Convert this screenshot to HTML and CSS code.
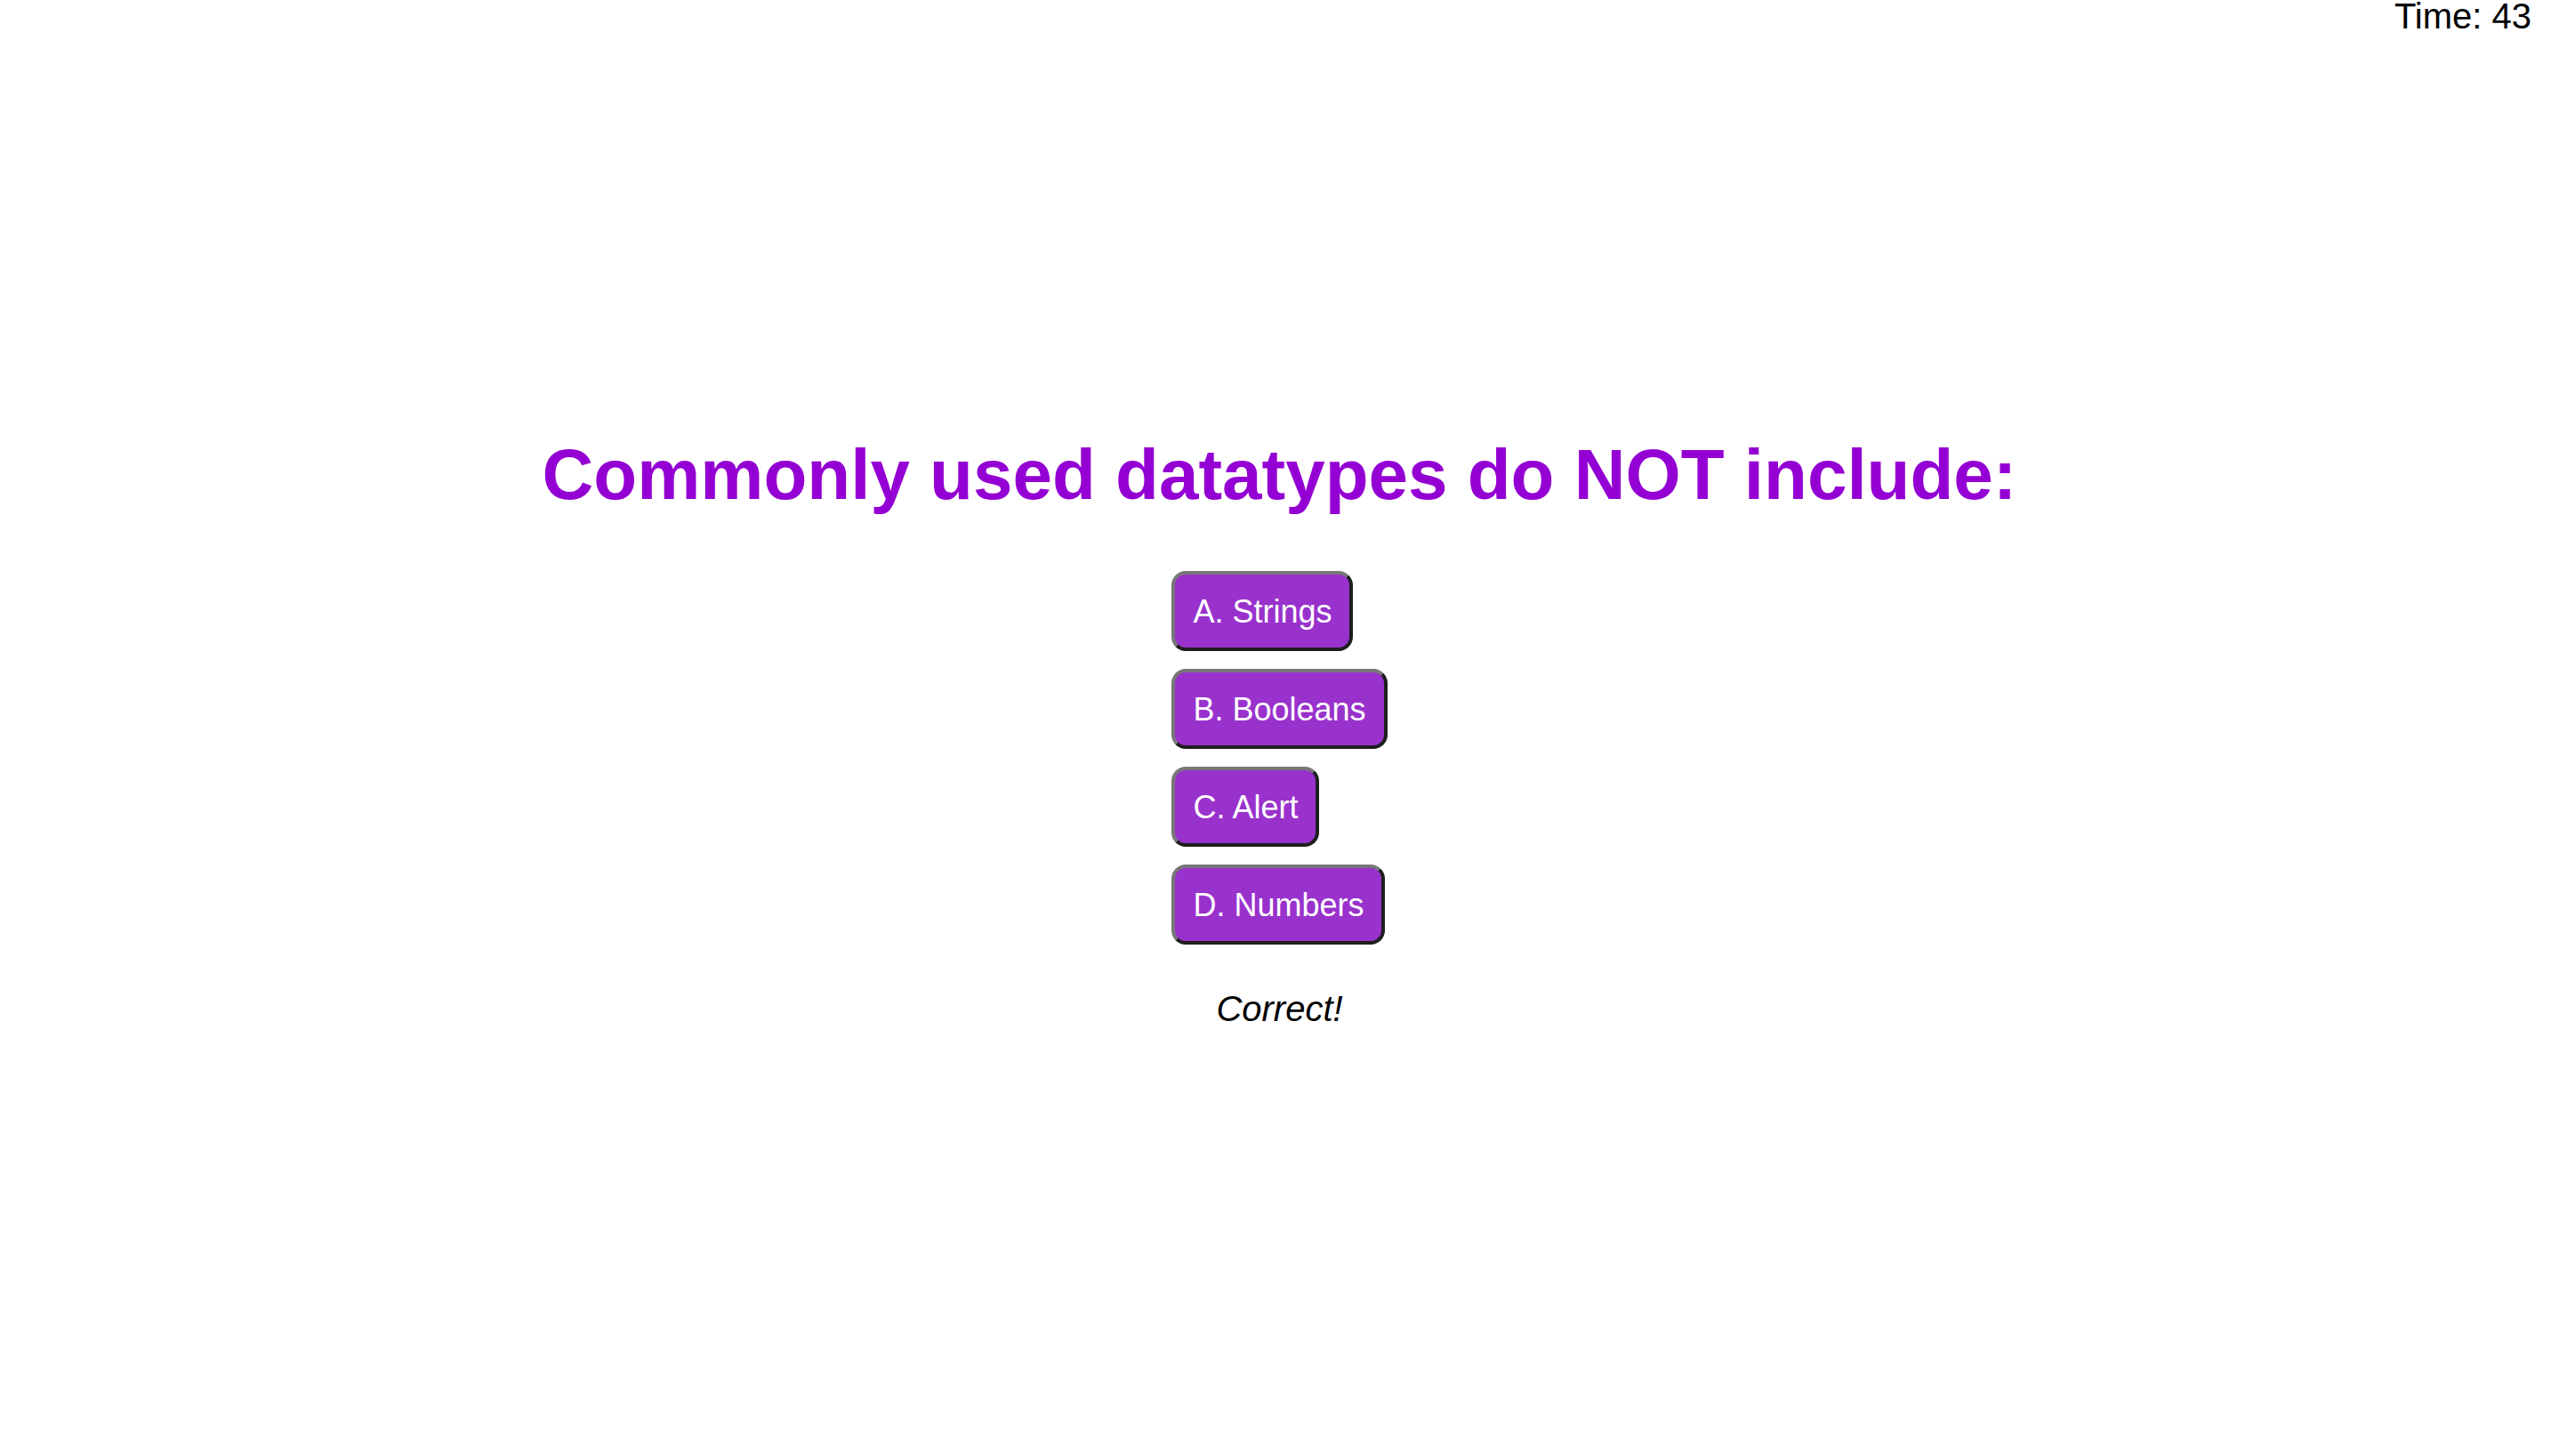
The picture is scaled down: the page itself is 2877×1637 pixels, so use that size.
FILE: index.html
```html
<!DOCTYPE html>
<html lang="en">
<head>
<meta charset="utf-8">
<title>Code Quiz</title>
<link rel="stylesheet" href="styles.css">
</head>
<body>
<header class="topbar">
  <div class="timer">Time: 43</div>
</header>
<main class="quiz">
  <h1 class="question">Commonly used datatypes do NOT include:</h1>
  <div class="choices">
    <button class="choice">A. Strings</button>
    <button class="choice">B. Booleans</button>
    <button class="choice">C. Alert</button>
    <button class="choice">D. Numbers</button>
  </div>
  <p class="result">Correct!</p>
</main>
</body>
</html>
```

FILE: styles.css
```css
html, body {
  margin: 0;
  padding: 0;
  background: #ffffff;
}

body {
  font-family: "Liberation Sans", Arial, sans-serif;
  color: #000000;
}

.topbar {
  display: flex;
  justify-content: flex-end;
  padding-right: 31px;
  height: 36px;
}

.timer {
  font-size: 40px;
  line-height: 36px;
}

.quiz {
  display: flex;
  flex-direction: column;
  align-items: center;
  padding-top: 452px;
}

.question {
  margin: 0;
  font-size: 80px;
  font-weight: bold;
  line-height: normal;
  color: #9400d3;
}

.choices {
  display: flex;
  flex-direction: column;
  align-items: flex-start;
  gap: 20px;
  margin-top: 62px;
}

.choice {
  font-family: "Liberation Sans", Arial, sans-serif;
  font-size: 36px;
  line-height: normal;
  color: #ffffff;
  background: #9932cc;
  border: 4px solid;
  border-color: #777777 #1e1e1e #1e1e1e #777777;
  border-radius: 16px;
  padding: 21px 20px 19px;
  margin: 0;
}

.result {
  margin: 50px 0 0;
  font-size: 40px;
  font-style: italic;
  line-height: normal;
}
```
